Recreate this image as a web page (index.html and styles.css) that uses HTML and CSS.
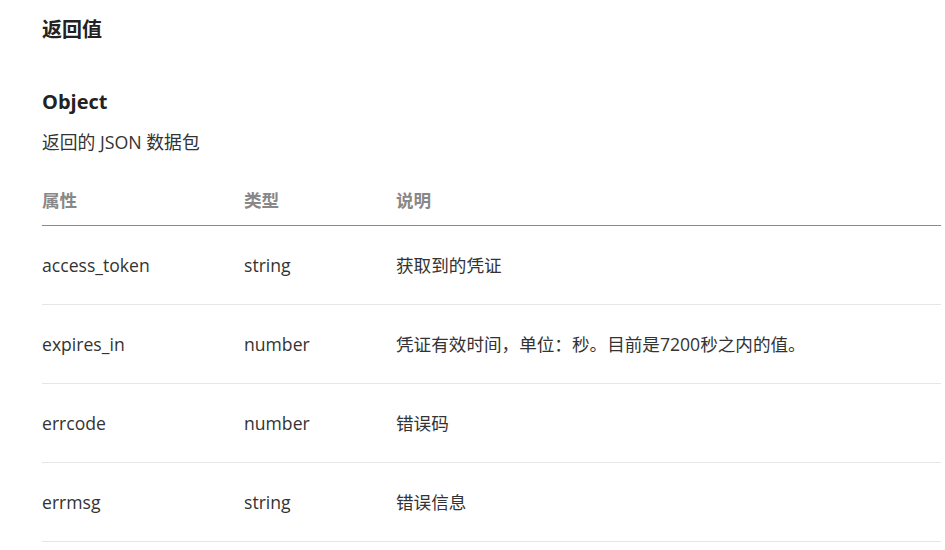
FILE: index.html
```html
<!DOCTYPE html>
<html lang="zh-CN">
<head>
<meta charset="utf-8">
<title>返回值</title>
<link rel="stylesheet" href="styles.css">
</head>
<body>
<main class="doc">
  <h2 class="title">返回值</h2>
  <h3 class="subtitle">Object</h3>
  <p class="desc">返回的 JSON 数据包</p>
  <table class="params">
    <thead>
      <tr><th class="c1">属性</th><th class="c2">类型</th><th>说明</th></tr>
    </thead>
    <tbody>
      <tr><td>access_token</td><td>string</td><td>获取到的凭证</td></tr>
      <tr><td>expires_in</td><td>number</td><td>凭证有效时间，单位：秒。目前是7200秒之内的值。</td></tr>
      <tr><td>errcode</td><td>number</td><td>错误码</td></tr>
      <tr><td>errmsg</td><td>string</td><td>错误信息</td></tr>
    </tbody>
  </table>
</main>
</body>
</html>
```
FILE: styles.css
```css
html, body {
  margin: 0;
  padding: 0;
  background: #fff;
}
body {
  font-family: "Open Sans", "Noto Sans CJK SC", sans-serif;
  color: #333;
}
.doc {
  padding: 16px 0 0 42px;
  width: 899px;
}
.title {
  margin: 0;
  font-size: 20px;
  line-height: 28px;
  font-weight: 700;
  color: #222;
}
.subtitle {
  margin: 44px 0 0;
  font-size: 20px;
  line-height: 28px;
  font-weight: 700;
  color: #222;
}
.desc {
  margin: 13px 0 0;
  font-size: 17.8px;
  line-height: 26px;
  color: #333;
}
.params {
  margin-top: 20px;
  width: 100%;
  border-collapse: collapse;
  font-size: 17.6px;
  line-height: 26px;
}
.params th {
  text-align: left;
  font-weight: 700;
  color: #888;
  padding: 12px 0 12px;
  border-bottom: 1px solid #8a8a8a;
}
.params .c1 { width: 202px; }
.params .c2 { width: 152px; }
.params td {
  padding: 26px 0;
  border-bottom: 1px solid #e6e6e6;
  color: #333;
}
```
